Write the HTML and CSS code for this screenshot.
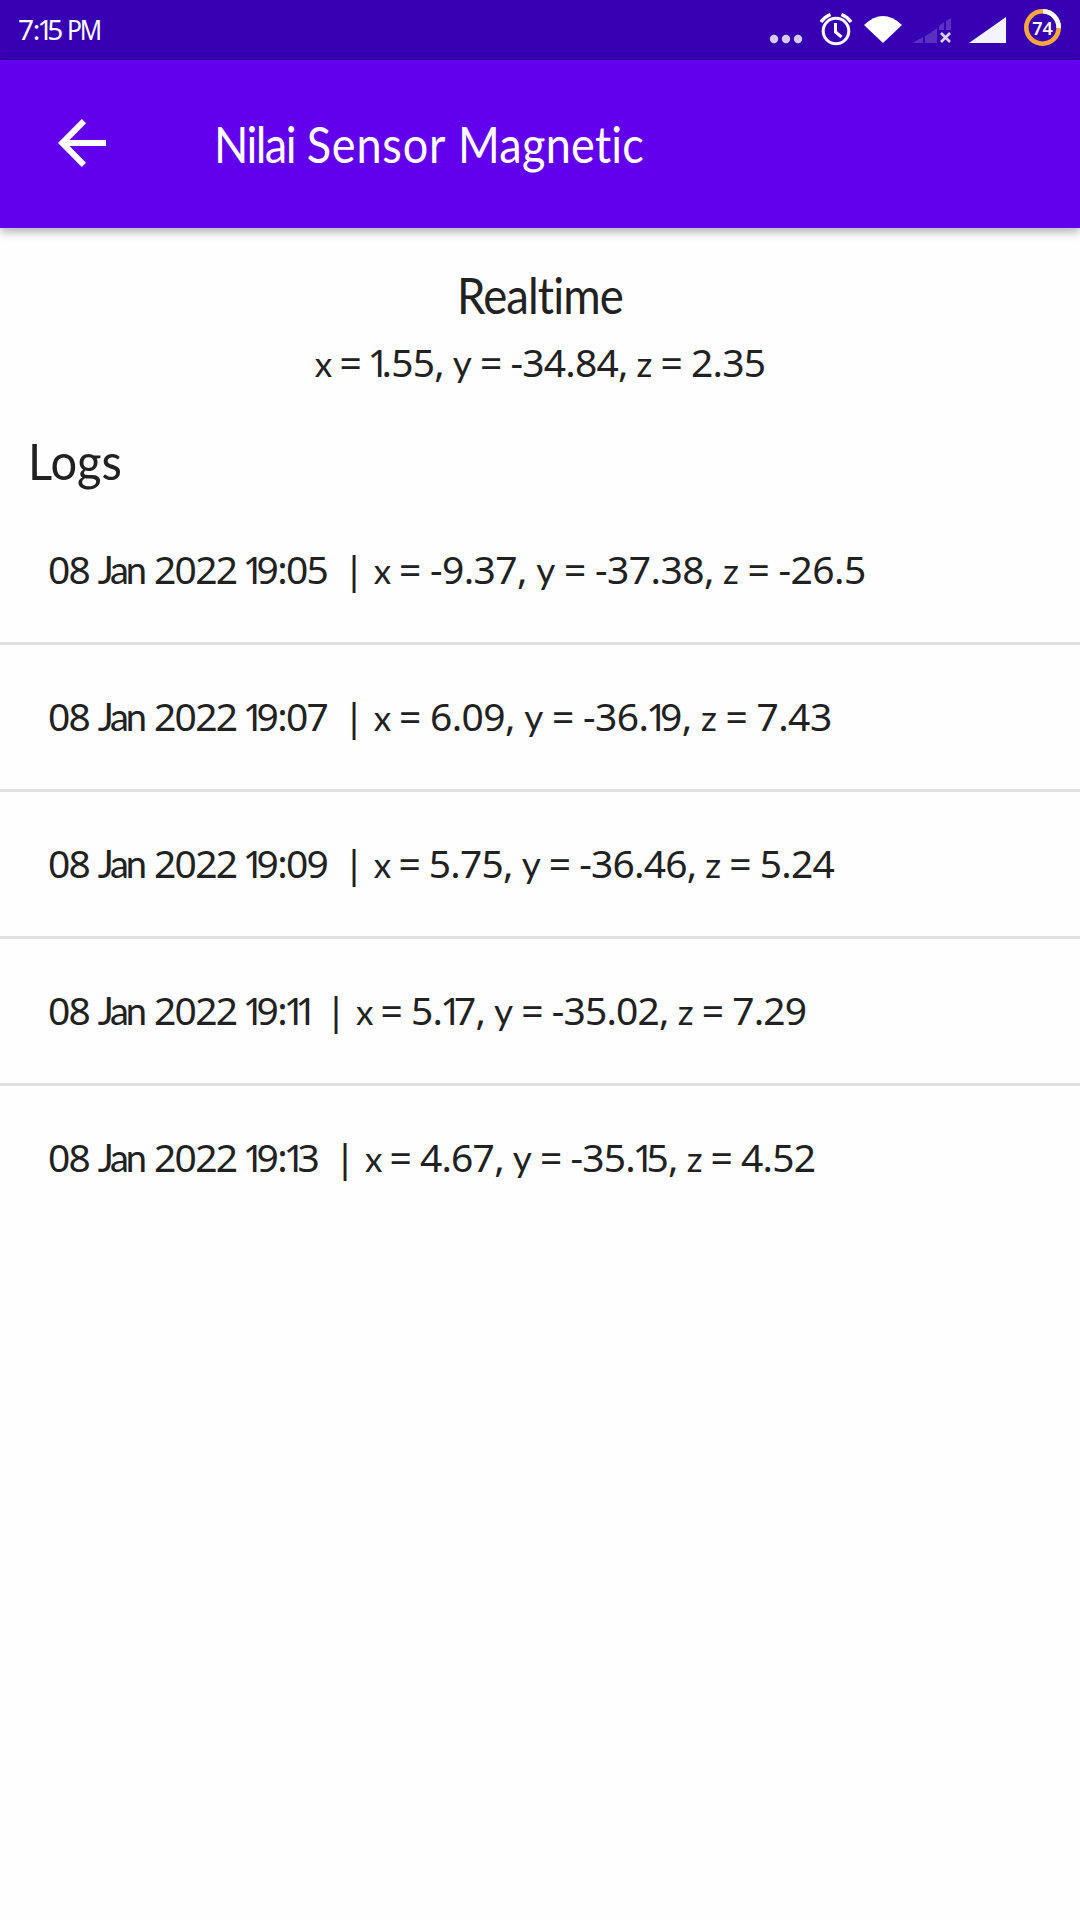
FILE: index.html
```html
<!DOCTYPE html>
<html lang="id">
<head>
<meta charset="utf-8">
<title>Nilai Sensor Magnetic</title>
<link rel="stylesheet" href="styles.css">
</head>
<body>
<header class="status">
  <span class="clock">7:<span class="one">1</span>5 <span class="pm">PM</span></span>
  <svg class="status-icons" width="312" height="60" viewBox="768 0 312 60" aria-hidden="true">
    <g fill="#d7ccf0"><circle cx="774" cy="39" r="4.2"/><circle cx="786" cy="39" r="4.2"/><circle cx="798" cy="39" r="4.2"/></g>
    <g fill="none" stroke="#fff" stroke-width="3"><circle cx="836" cy="31" r="12.8"/><path d="M835.5 23v9l6 5"/><path d="M821 22q3.500-5 9.500-7.500M851 22q-3.500-5-9.500-7.500" stroke-width="3.400"/></g>
    <path d="M864 25Q883 7 902 25L883 43Z" fill="#fff"/>
    <path d="M914 43v-1l9-5v6zM925 36l7-4v11h-7zM934.500 30l2.500-2v15h-5V31.500zM939 26l5-4v8h-5zM946 21l5-3v12h-5z" fill="#5a2fc2"/>
    <path d="M941 33l9 9M950 33l-9 9" stroke="#ddd4f3" stroke-width="2.600"/>
    <path d="M969 43L1006 17V43Z" fill="#f5f3fc"/>
    <circle cx="1042.500" cy="27.500" r="16.200" fill="none" stroke="#ffa63c" stroke-width="4.600"/>
    <path d="M1043 11.300A16.200 16.200 0 0 1 1058.700 28" fill="none" stroke="#fff" stroke-width="4.600"/>
    <text class="battery" x="1042.500" y="34.500" text-anchor="middle">74</text>
  </svg>
</header>
<div class="appbar">
  <svg class="back" width="48" height="48" viewBox="0 0 48 48" aria-hidden="true"><path d="M48 21H11.500L28 4.200 23.800 0 0 24l23.800 24L28 43.800 11.500 27H48z" fill="#fff"/></svg>
  <h1 class="title"><span class="tight">Nilai</span> <span class="loose">Sensor</span> Magnetic</h1>
</div>
<main>
  <h2 class="heading realtime">Realtime</h2>
  <p class="values current"><var class="x">x</var> = <span class="one">1</span>.55, <var class="y">y</var> = -34.84, <var>z</var> = 2.35</p>
  <h2 class="heading logs-title">Logs</h2>
  <ul class="logs">
    <li class="values"><span class="date">08 <span class="month">Jan</span> 2022 <span class="one">1</span>9:05</span><span class="sep">|</span><span class="wide"><var class="x">x</var> = -9.37, <var class="y">y</var> = -37.38, <var>z</var> = -26.5</span></li>
    <li class="values"><span class="date">08 <span class="month">Jan</span> 2022 <span class="one">1</span>9:07</span><span class="sep">|</span><span class="wide"><var class="x">x</var> = 6.09, <var class="y">y</var> = -36.<span class="one">1</span>9, <var>z</var> = 7.43</span></li>
    <li class="values"><span class="date">08 <span class="month">Jan</span> 2022 <span class="one">1</span>9:09</span><span class="sep">|</span><span><var class="x">x</var> = 5.75, <var class="y">y</var> = -36.46, <var>z</var> = 5.24</span></li>
    <li class="values"><span class="date">08 <span class="month">Jan</span> 2022 <span class="one">1</span>9:<span class="one">1</span><span class="one">1</span></span><span class="sep">|</span><span><var class="x">x</var> = 5.<span class="one">1</span>7, <var class="y">y</var> = -35.02, <var>z</var> = 7.29</span></li>
    <li class="values"><span class="date">08 <span class="month">Jan</span> 2022 <span class="one">1</span>9:<span class="one">1</span>3</span><span class="sep">|</span><span><var class="x">x</var> = 4.67, <var class="y">y</var> = -35.<span class="one">1</span>5, <var>z</var> = 4.52</span></li>
  </ul>
</main>
</body>
</html>
```
FILE: styles.css
```css
* { box-sizing: border-box; margin: 0; padding: 0; }
body { min-height: 1920px; background: #fefefe; color: #212121; font-family: Lato, "Noto Sans", sans-serif; font-variant-ligatures: none; }
.status { display: flex; justify-content: space-between; height: 60px; padding-left: 18px; background: #3700b3; color: #fff; }
.clock { font: 28px/59px "Noto Sans", sans-serif; letter-spacing: -1.3px; white-space: nowrap; }
.pm { display: inline-block; margin-left: -1px; letter-spacing: -2.4px; transform: scaleX(.88); transform-origin: left; }
.status-icons { flex: none; }
.battery { font: 600 18px "Noto Sans", sans-serif; fill: #fff; }
.appbar { display: flex; align-items: center; gap: 108px; height: 168px; padding: 0 58px; background: #6200ee; color: #fff; box-shadow: 0 3px 10px rgba(0,0,0,.36); }
.back { flex: none; margin-bottom: 2px; }
.title, .heading { font-size: 50px; line-height: 60px; font-weight: 400; white-space: nowrap; }
.title { margin-bottom: 1px; transform: scaleX(.9); transform-origin: left; letter-spacing: .3px; }
.tight { letter-spacing: -1.7px; }
.loose { letter-spacing: .9px; }
.realtime { margin-top: 37px; text-align: center; transform: scaleX(.91); letter-spacing: -1px; }
.values { font: 39px/60px "Noto Sans", sans-serif; letter-spacing: -.8px; word-spacing: -.4px; white-space: nowrap; }
.values var { font: 35px/1 Lato, sans-serif; }
.values .x { margin-right: -1px; }
.values .y { font-size: 37px; }
.wide { letter-spacing: -.54px; }
.current { text-align: center; margin-top: 7px; height: 60px; }
.logs-title { margin: 39px 0 0 28px; transform: scaleX(.94); transform-origin: left; }
.logs { list-style: none; margin-top: 7px; }
.logs li { display: flex; align-items: center; height: 147px; padding: 0 0 2px 48px; border-bottom: 3px solid #e0e0e0; }
.logs li:last-child { border-bottom-color: transparent; }
.date { letter-spacing: -1.7px; word-spacing: 0; }
.month { font: 38px/1 Lato, sans-serif; letter-spacing: -3px; margin-right: 1.5px; }
.one { display: inline-block; width: .3em; text-indent: -.06em; }
.sep { margin: 0 10px 0 16px; }
```
